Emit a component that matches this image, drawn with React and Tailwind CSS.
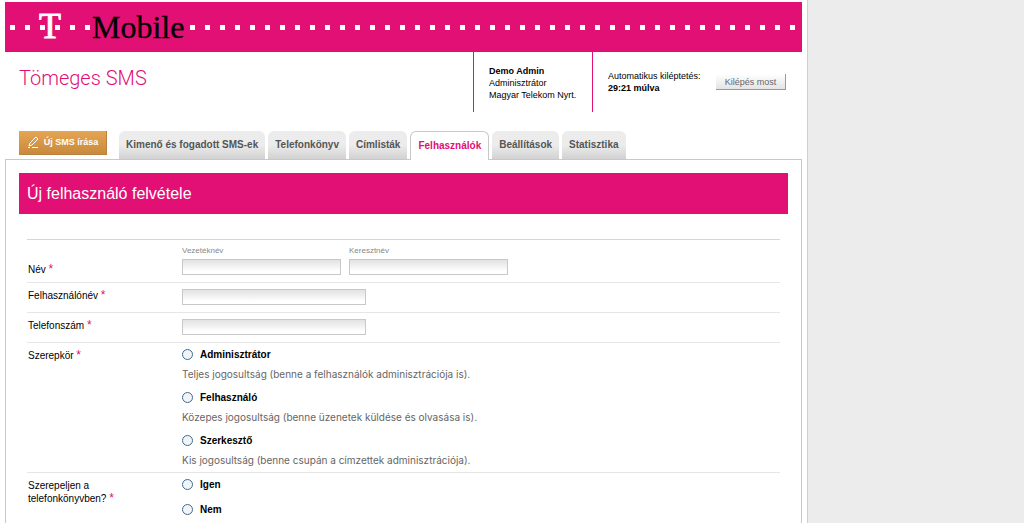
import { useState } from 'react';

const tabs = [
  { label: 'Kimenő és fogadott SMS-ek' },
  { label: 'Telefonkönyv' },
  { label: 'Címlisták' },
  { label: 'Felhasználók', active: true },
  { label: 'Beállítások' },
  { label: 'Statisztika' },
];

const roles = [
  {
    value: 'admin',
    label: 'Adminisztrátor',
    description: 'Teljes jogosultság (benne a felhasználók adminisztrációja is).',
  },
  {
    value: 'user',
    label: 'Felhasználó',
    description: 'Közepes jogosultság (benne üzenetek küldése és olvasása is).',
  },
  {
    value: 'editor',
    label: 'Szerkesztő',
    description: 'Kis jogosultság (benne csupán a címzettek adminisztrációja).',
  },
];

const BrandBar = () => (
  <div className="h-[50px] bg-[#e20f74] overflow-hidden">
    <svg width="100%" height="50" role="img" aria-label="T-Mobile">
      <defs>
        <pattern id="digits" x="5" y="0" width="15" height="50" patternUnits="userSpaceOnUse">
          <rect x="0" y="23" width="5" height="5" fill="#fff" />
        </pattern>
      </defs>
      <rect width="100%" height="50" fill="url(#digits)" />
      <rect x="86" y="10" width="96" height="30" fill="#e20f74" />
      <text x="34" y="36" fill="#fff" stroke="#fff" strokeWidth="0.9" fontSize="36" fontFamily="Liberation Serif, serif">T</text>
      <text x="87" y="36" fill="#000" stroke="#000" strokeWidth="0.3" fontSize="32" fontFamily="Liberation Serif, serif">Mobile</text>
    </svg>
  </div>
);

const Required = () => <span className="text-xs leading-[13px] text-[#e20f74]">*</span>;

const Row = ({ id, label, className = '', children }) => (
  <div className="flex border-b border-[#e6e6e6] last:border-b-0">
    <div className={`w-[155px] shrink-0 text-[10px] leading-[13px] pt-[6px] pb-[6px] pl-px pr-6 ${className}`}>
      {id ? (
        <label htmlFor={id}>{label} <Required /></label>
      ) : (
        <span>{label} <Required /></span>
      )}
    </div>
    <div className="flex-1 min-w-0">{children}</div>
  </div>
);

const inputStyle =
  'block h-4 px-1 text-xs border border-[#c8c8c8] bg-linear-to-b from-[#e2e2e2] to-white to-80% outline-none';

const Radio = ({ name, value, label, checked, onChange }) => (
  <label className="flex items-center gap-[7px] h-4 text-[10px] font-bold">
    <input
      type="radio"
      name={name}
      value={value}
      checked={checked}
      onChange={() => onChange(value)}
      className="appearance-none size-[11px] rounded-full border border-[#3f6a92] bg-[#f1f5f8] checked:bg-[#3f6a92]"
    />
    {label}
  </label>
);

const App = () => {
  const [role, setRole] = useState('');
  const [listed, setListed] = useState('');

  return (
    <div className="min-h-screen flex bg-[#ececec] text-black font-['Liberation_Sans',sans-serif]">
      <div className="w-full max-w-[808px] flex flex-col bg-white border-r border-[#cfcfcf] pt-[2px] pl-[5px] pr-[5px]">
        <BrandBar />

        <header className="flex items-start h-[60px]">
          <h1 className="flex-1 pl-[14px] pt-3 text-xl leading-7 font-light text-[#e20f74] font-['Roboto','Liberation_Sans',sans-serif]">
            Tömeges SMS
          </h1>
          <div className="h-full w-[119px] shrink-0 pl-[15px] pt-[13px] border-l border-[#e20f74] text-[9px] leading-3 whitespace-nowrap">
            <p className="font-bold">Demo Admin</p>
            <p>Adminisztrátor</p>
            <p>Magyar Telekom Nyrt.</p>
          </div>
          <div className="h-full w-[210px] shrink-0 flex items-center justify-between pl-[15px] pr-4 border-l border-[#e20f74] text-[9px] leading-3 whitespace-nowrap">
            <div>
              <p>Automatikus kiléptetés:</p>
              <p className="font-bold">29:21 múlva</p>
            </div>
            <button
              type="button"
              className="h-4 w-[70px] text-[9px] text-[#666] bg-linear-to-b from-white to-[#e4e4e4] border-r border-b border-[#999]"
            >
              Kilépés most
            </button>
          </div>
        </header>

        <nav className="flex items-start pl-[14px] pt-[19px] text-[10px] font-bold">
          <button
            type="button"
            className="flex items-center justify-center gap-1 w-[88px] h-6 mr-3 text-[9px] text-white bg-linear-to-b from-[#e6a552] to-[#c98a3e] border-b border-r border-[#b98040]"
          >
            <svg width="13" height="13" viewBox="0 0 13 13" fill="none" stroke="#fff" strokeWidth="1">
              <path d="M2 10 L3 7 L9 1 L11 3 L5 9 Z" />
              <path d="M1 11.5 H3 M5 11.5 H11" />
            </svg>
            Új SMS írása
          </button>
          <div className="flex gap-[3px]">
            {tabs.map((tab) => (
              <a
                key={tab.label}
                href="#"
                className={
                  tab.active
                    ? 'relative h-[29px] -mb-px px-[7px] leading-7 rounded-t-md border border-b-0 border-[#c8c8c8] bg-white text-[#e20f74]'
                    : 'h-7 px-[7px] leading-7 rounded-t-md bg-linear-to-b from-[#ececec] from-50% to-[#d2d2d2] text-[#555]'
                }
              >
                {tab.label}
              </a>
            ))}
          </div>
        </nav>

        <main className="flex-1 border border-b-0 border-[#c8c8c8] pt-[13px] px-[13px]">
          <h2 className="h-[41px] px-2 bg-[#e20f74] text-white text-base leading-[41px]">
            Új felhasználó felvétele
          </h2>

          <form className="mt-[25px] mx-2 border-t border-[#d6d6d6]">
            <Row id="lastName" label="Név" className="self-end">
              <div className="flex gap-2 pt-[6px] pb-[7px]">
                <div>
                  <label htmlFor="lastName" className="block text-[8px] leading-[10px] mb-[3px] text-[#888]">Vezetéknév</label>
                  <input id="lastName" type="text" className={`${inputStyle} w-[159px]`} />
                </div>
                <div>
                  <label htmlFor="firstName" className="block text-[8px] leading-[10px] mb-[3px] text-[#888]">Keresztnév</label>
                  <input id="firstName" type="text" className={`${inputStyle} w-[159px]`} />
                </div>
              </div>
            </Row>

            <Row id="userName" label="Felhasználónév">
              <div className="pt-[6px] pb-[7px]">
                <input id="userName" type="text" className={`${inputStyle} w-[184px]`} />
              </div>
            </Row>

            <Row id="phone" label="Telefonszám">
              <div className="pt-[6px] pb-[7px]">
                <input id="phone" type="text" className={`${inputStyle} w-[184px]`} />
              </div>
            </Row>

            <Row label="Szerepkör">
              <div className="flex flex-col gap-[7px] pt-[3px] pb-1">
                {roles.map((r) => (
                  <div key={r.value}>
                    <Radio name="role" value={r.value} label={r.label} checked={role === r.value} onChange={setRole} />
                    <p className="mt-1 text-[10px] leading-4 text-[#666] font-['Inter','Liberation_Sans',sans-serif]">
                      {r.description}
                    </p>
                  </div>
                ))}
              </div>
            </Row>

            <Row label="Szerepeljen a telefonkönyvben?">
              <div className="flex flex-col gap-[9px] pt-[3px] pb-[5px]">
                <Radio name="listed" value="yes" label="Igen" checked={listed === 'yes'} onChange={setListed} />
                <Radio name="listed" value="no" label="Nem" checked={listed === 'no'} onChange={setListed} />
              </div>
            </Row>
          </form>
        </main>
      </div>
    </div>
  );
};

export default App;
